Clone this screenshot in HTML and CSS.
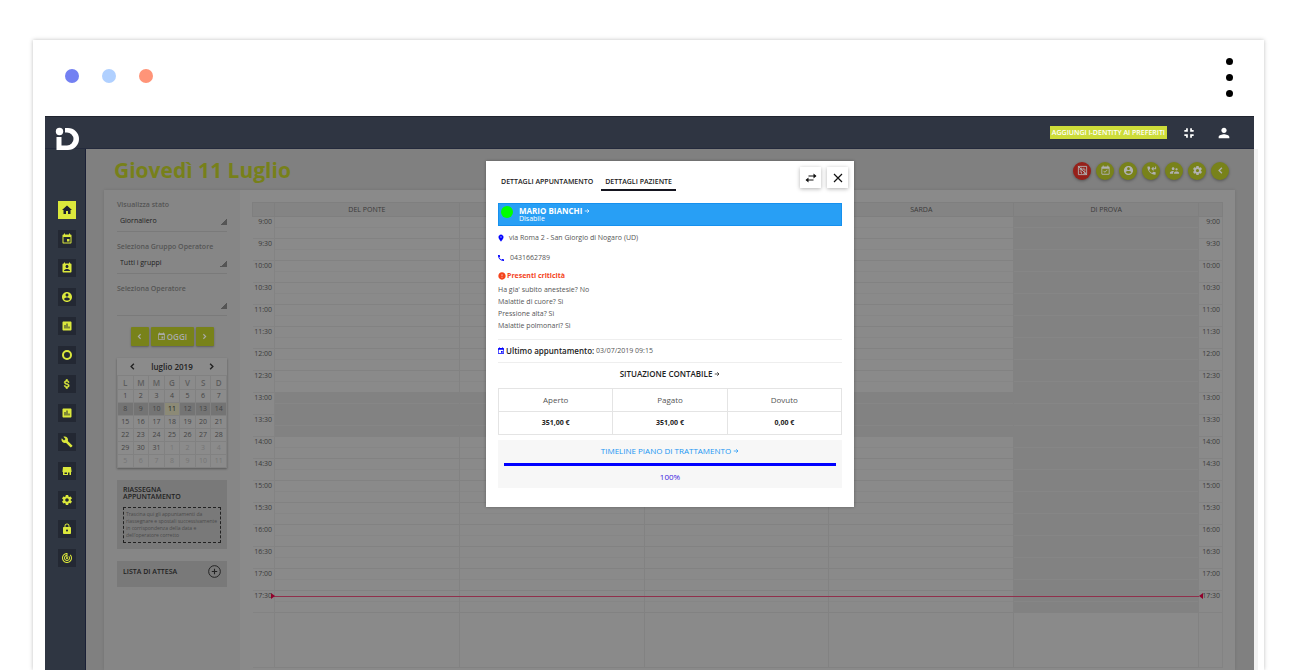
FILE: index.html
```html
<!DOCTYPE html>
<html lang="it">
<head>
<meta charset="utf-8">
<title>Giovedì 11 Luglio</title>
<link rel="stylesheet" href="styles.css">
</head>
<body>
<svg class="sprite" aria-hidden="true">
  <symbol id="home" viewBox="0 0 24 24"><path d="M10 20v-6h4v6h5v-8h3L12 3 2 12h3v8z"/></symbol>
  <symbol id="event" viewBox="0 0 24 24"><path d="M17 12h-5v5h5v-5zM16 1v2H8V1H6v2H5c-1.11 0-1.99.9-1.99 2L3 19c0 1.1.89 2 2 2h14c1.1 0 2-.9 2-2V5c0-1.1-.9-2-2-2h-1V1h-2zm3 18H5V8h14v11z"/></symbol>
  <symbol id="contact" viewBox="0 0 24 24"><path d="M19 3h-1V1h-2v2H8V1H6v2H5c-1.11 0-2 .9-2 2v14c0 1.1.89 2 2 2h14c1.1 0 2-.9 2-2V5c0-1.1-.9-2-2-2zm-7 3c1.66 0 3 1.34 3 3s-1.34 3-3 3-3-1.34-3-3 1.34-3 3-3zm6 12H6v-1c0-2 4-3.1 6-3.1s6 1.1 6 3.1v1z"/></symbol>
  <symbol id="account" viewBox="0 0 24 24"><path d="M12 2C6.48 2 2 6.48 2 12s4.48 10 10 10 10-4.48 10-10S17.52 2 12 2zm0 3c1.66 0 3 1.34 3 3s-1.34 3-3 3-3-1.34-3-3 1.34-3 3-3zm0 14.2c-2.5 0-4.71-1.28-6-3.22.03-1.99 4-3.08 6-3.08 1.99 0 5.97 1.09 6 3.08-1.29 1.94-3.5 3.22-6 3.22z"/></symbol>
  <symbol id="poll" viewBox="0 0 24 24"><path d="M19 3H5c-1.1 0-2 .9-2 2v14c0 1.1.9 2 2 2h14c1.1 0 2-.9 2-2V5c0-1.1-.9-2-2-2zM9 17H7v-7h2v7zm4 0h-2V7h2v10zm4 0h-2v-4h2v4z"/></symbol>
  <symbol id="ring" viewBox="0 0 24 24"><circle cx="12" cy="12" r="8" fill="none" stroke="currentColor" stroke-width="4"/></symbol>
  <symbol id="money" viewBox="0 0 24 24"><path d="M11.8 10.9c-2.27-.59-3-1.2-3-2.15 0-1.09 1.01-1.85 2.7-1.85 1.78 0 2.44.85 2.5 2.1h2.21c-.07-1.72-1.12-3.3-3.21-3.81V3h-3v2.16c-1.94.42-3.5 1.68-3.5 3.61 0 2.31 1.91 3.46 4.7 4.13 2.5.6 3 1.48 3 2.41 0 .69-.49 1.79-2.7 1.79-2.06 0-2.87-.92-2.98-2.1h-2.2c.12 2.19 1.76 3.42 3.68 3.83V21h3v-2.15c1.95-.37 3.5-1.5 3.5-3.55 0-2.84-2.43-3.81-4.7-4.4z" stroke="currentColor"/></symbol>
  <symbol id="build" viewBox="0 0 24 24"><path d="M22.7 19l-9.1-9.1c.9-2.3.4-5-1.5-6.9-2-2-5-2.4-7.4-1.3L9 6 6 9 1.6 4.7C.4 7.1.9 10.1 2.9 12.1c1.9 1.9 4.6 2.4 6.9 1.5l9.1 9.1c.4.4 1 .4 1.4 0l2.3-2.3c.5-.4.5-1.1.1-1.4z"/></symbol>
  <symbol id="store" viewBox="0 0 24 24"><path d="M4 4h16l1 8v2h-1v6h-3v-5h-3v5H4v-6H3v-2zM7 15v3h5v-3z"/></symbol>
  <symbol id="settings" viewBox="0 0 24 24"><path d="M19.43 12.98c.04-.32.07-.64.07-.98s-.03-.66-.07-.98l2.11-1.65c.19-.15.24-.42.12-.64l-2-3.46c-.12-.22-.39-.3-.61-.22l-2.49 1c-.52-.4-1.08-.73-1.69-.98l-.38-2.65C14.46 2.18 14.25 2 14 2h-4c-.25 0-.46.18-.49.42l-.38 2.65c-.61.25-1.17.59-1.69.98l-2.49-1c-.23-.09-.49 0-.61.22l-2 3.46c-.13.22-.07.49.12.64l2.11 1.65c-.04.32-.07.65-.07.98s.03.66.07.98l-2.11 1.65c-.19.15-.24.42-.12.64l2 3.46c.12.22.39.3.61.22l2.49-1c.52.4 1.08.73 1.69.98l.38 2.65c.03.24.24.42.49.42h4c.25 0 .46-.18.49-.42l.38-2.65c.61-.25 1.17-.59 1.69-.98l2.49 1c.23.09.49 0 .61-.22l2-3.46c.12-.22.07-.49-.12-.64l-2.11-1.65zM12 15.5c-1.93 0-3.5-1.57-3.5-3.5s1.57-3.5 3.5-3.5 3.5 1.57 3.5 3.5-1.57 3.5-3.5 3.5z"/></symbol>
  <symbol id="lock" viewBox="0 0 24 24"><path d="M18 8h-1V6c0-2.76-2.24-5-5-5S7 3.24 7 6v2H6c-1.1 0-2 .9-2 2v10c0 1.1.9 2 2 2h12c1.1 0 2-.9 2-2V10c0-1.1-.9-2-2-2zm-6 9c-1.1 0-2-.9-2-2s.9-2 2-2 2 .9 2 2-.9 2-2 2zm3.1-9H8.9V6c0-1.71 1.39-3.1 3.1-3.1 1.71 0 3.1 1.39 3.1 3.1v2z"/></symbol>
  <symbol id="track" viewBox="0 0 24 24"><path d="M19.07 4.93l-1.41 1.41C19.1 7.79 20 9.79 20 12c0 4.42-3.58 8-8 8s-8-3.58-8-8c0-4.08 3.05-7.44 7-7.93v2.02C8.16 6.57 6 9.03 6 12c0 3.31 2.69 6 6 6s6-2.69 6-6c0-1.66-.67-3.16-1.76-4.24l-1.41 1.41C15.55 9.9 16 10.9 16 12c0 2.21-1.79 4-4 4s-4-1.79-4-4c0-1.86 1.28-3.41 3-3.86v2.14c-.6.35-1 .98-1 1.72 0 1.1.9 2 2 2s2-.9 2-2c0-.74-.4-1.38-1-1.72V2h-1C6.48 2 2 6.48 2 12s4.48 10 10 10 10-4.48 10-10c0-2.76-1.12-5.26-2.93-7.07z"/></symbol>
  <symbol id="phone" viewBox="0 0 24 24"><path d="M6.62 10.79c1.44 2.83 3.76 5.14 6.59 6.59l2.2-2.2c.27-.27.67-.36 1.02-.24 1.12.37 2.33.57 3.57.57.55 0 1 .45 1 1V20c0 .55-.45 1-1 1-9.39 0-17-7.61-17-17 0-.55.45-1 1-1h3.5c.55 0 1 .45 1 1 0 1.25.2 2.45.57 3.57.11.35.03.74-.25 1.02l-2.2 2.2z"/></symbol>
  <symbol id="callback" viewBox="0 0 24 24"><use href="#phone"/><path d="M13 8h8V3M16.500 4.500L13 8l3.500 3.500" fill="none" stroke="currentColor" stroke-width="2.200"/></symbol>
  <symbol id="place" viewBox="0 0 24 24"><path d="M12 2C8.130 2 5 5.130 5 9c0 5.250 7 13 7 13s7-7.750 7-13c0-3.870-3.130-7-7-7zm0 9.500c-1.380 0-2.500-1.120-2.500-2.500s1.120-2.500 2.500-2.500 2.500 1.120 2.500 2.500-1.120 2.500-2.500 2.500z" stroke="currentColor"/></symbol>
  <symbol id="person" viewBox="0 0 24 24"><path d="M12 12c2.210 0 4-1.790 4-4s-1.790-4-4-4-4 1.790-4 4 1.790 4 4 4zm0 2c-2.670 0-8 1.340-8 4v2h16v-2c0-2.660-5.330-4-8-4z"/></symbol>
  <symbol id="shrink" viewBox="0 0 24 24"><path d="M4 17h3v3h3v-6H4v3zM7 7H4v3h6V4H7v3zm7 13h3v-3h3v-3h-6v6zm3-13V4h-3v6h6V7h-3z"/></symbol>
  <symbol id="error" viewBox="0 0 24 24"><path d="M12 1C6 1 1 6 1 12s5 11 11 11 11-5 11-11S18 1 12 1zm1 16h-2v-2h2v2zm0-4h-2V7h2v6z"/></symbol>
  <symbol id="available" viewBox="0 0 24 24"><path d="M16.530 11.060L15.470 10l-4.880 4.880-2.120-2.120-1.060 1.060L10.590 17l5.940-5.940zM19 3h-1V1h-2v2H8V1H6v2H5c-1.110 0-1.990.9-1.990 2L3 19c0 1.100.89 2 2 2h14c1.100 0 2-.9 2-2V5c0-1.100-.9-2-2-2zm0 16H5V8h14v11z"/></symbol>
  <symbol id="group" viewBox="0 0 24 24"><path d="M16.500 12c1.380 0 2.490-1.120 2.490-2.500S17.880 7 16.500 7 14 8.120 14 9.500s1.120 2.500 2.500 2.500zM9 11c1.660 0 2.990-1.340 2.990-3S10.660 5 9 5 6 6.340 6 8s1.340 3 3 3zm7.500 3c-1.830 0-5.500.92-5.500 2.750V19h11v-2.250c0-1.830-3.670-2.750-5.500-2.750zM9 13c-2.330 0-7 1.170-7 3.500V19h7v-2.250c0-.85.33-2.340 2.370-3.470C10.500 13.100 9.660 13 9 13z"/></symbol>
  <symbol id="nocode" viewBox="0 0 24 24"><path d="M3 3h18v18H3zM7 7h4v4H7zM15 6v5h4M6 15h4v4M14 14h2v2h3M14 19h5M2 2l20 20" fill="none" stroke="currentColor" stroke-width="2"/></symbol>
  <symbol id="left" viewBox="0 0 24 24"><path d="M15 6l-6 6 6 6" fill="none" stroke="currentColor" stroke-width="3"/></symbol>
  <symbol id="right" viewBox="0 0 24 24"><path d="M9 6l6 6-6 6" fill="none" stroke="currentColor" stroke-width="3"/></symbol>
  <symbol id="arrow" viewBox="0 0 24 24"><path d="M3 12h17M13 5l7 7-7 7" fill="none" stroke="currentColor" stroke-width="3"/></symbol>
  <symbol id="swap" viewBox="0 0 24 24"><path d="M7 8h14M3 16h14" fill="none" stroke="currentColor" stroke-width="2.400"/><path d="M17 3l6 5-6 5zM7 11l-6 5 6 5z"/></symbol>
  <symbol id="close" viewBox="0 0 24 24"><path d="M4 4l16 16M20 4L4 20" fill="none" stroke="currentColor" stroke-width="2.400"/></symbol>
  <symbol id="plus" viewBox="0 0 24 24"><path d="M12 7v10M7 12h10" fill="none" stroke="currentColor" stroke-width="2"/><circle cx="12" cy="12" r="10.800" fill="none" stroke="currentColor" stroke-width="1.800"/></symbol>
</svg>

<div class="frame">
  <header class="chrome">
    <div class="lights"><i class="light violet"></i><i class="light sky"></i><i class="light coral"></i></div>
    <div class="kebab"><i></i><i></i><i></i></div>
  </header>

  <div class="app">
    <div class="topbar">
      <a class="logo" href="#" aria-label="Home">
        <svg viewBox="0 0 24 24"><circle cx="4.500" cy="4.500" r="3.700"/><path d="M1.500 10h5v8.500h5.500a6.300 6.300 0 0 0 0-13H10V1h3a11 11 0 0 1 0 22H1.500z"/></svg>
      </a>
      <button class="favorite">AGGIUNGI I-DENTITY AI PREFERITI</button>
      <button class="bar-icon" aria-label="Riduci"><svg class="ic14"><use href="#shrink"/></svg></button>
      <button class="bar-icon" aria-label="Profilo"><svg class="ic16"><use href="#person"/></svg></button>
    </div>

    <div class="body">
      <nav class="sidebar">
        <a class="active" href="#" aria-label="Home"><svg><use href="#home"/></svg></a>
        <a href="#" aria-label="Agenda"><svg><use href="#event"/></svg></a>
        <a href="#" aria-label="Contatti"><svg><use href="#contact"/></svg></a>
        <a href="#" aria-label="Pazienti"><svg><use href="#account"/></svg></a>
        <a href="#" aria-label="Statistiche"><svg><use href="#poll"/></svg></a>
        <a href="#" aria-label="Utilizzo"><svg><use href="#ring"/></svg></a>
        <a href="#" aria-label="Pagamenti"><svg><use href="#money"/></svg></a>
        <a href="#" aria-label="Report"><svg><use href="#poll"/></svg></a>
        <a href="#" aria-label="Strumenti"><svg><use href="#build"/></svg></a>
        <a href="#" aria-label="Magazzino"><svg><use href="#store"/></svg></a>
        <a href="#" aria-label="Impostazioni"><svg><use href="#settings"/></svg></a>
        <a href="#" aria-label="Sicurezza"><svg><use href="#lock"/></svg></a>
        <a href="#" aria-label="Monitoraggio"><svg><use href="#track"/></svg></a>
      </nav>

      <main class="main">
        <div class="heading">
          <h1>Giovedì 11 Luglio</h1>
          <div class="actions">
            <button class="red" aria-label="Codice"><svg><use href="#nocode"/></svg></button>
            <button aria-label="Disponibilità"><svg><use href="#available"/></svg></button>
            <button aria-label="Paziente"><svg><use href="#account"/></svg></button>
            <button aria-label="Richiami"><svg><use href="#callback"/></svg></button>
            <button aria-label="Gruppo"><svg><use href="#group"/></svg></button>
            <button aria-label="Impostazioni"><svg><use href="#settings"/></svg></button>
            <button aria-label="Chiudi barra"><svg><use href="#left"/></svg></button>
          </div>
        </div>

        <div class="card">
          <aside class="aside">
            <div class="field"><label for="stato">Visualizza stato</label><select id="stato"><option>Giornaliero</option></select></div>
            <div class="field"><label for="gruppo">Seleziona Gruppo Operatore</label><select id="gruppo"><option>Tutti i gruppi</option></select></div>
            <div class="field"><label for="operatore">Seleziona Operatore</label><select id="operatore"><option></option></select></div>
            <div class="pager">
              <button aria-label="Giorno precedente"><svg><use href="#left"/></svg></button>
              <button class="today"><svg><use href="#event"/></svg>OGGI</button>
              <button aria-label="Giorno successivo"><svg><use href="#right"/></svg></button>
            </div>
            <div class="month">
              <div class="month-head">
                <button aria-label="Mese precedente"><svg><use href="#left"/></svg></button>
                <span>luglio 2019</span>
                <button aria-label="Mese successivo"><svg><use href="#right"/></svg></button>
              </div>
              <table>
                <thead><tr><th>L</th><th>M</th><th>M</th><th>G</th><th>V</th><th>S</th><th>D</th></tr></thead>
                <tbody>
                  <tr><td>1</td><td>2</td><td>3</td><td>4</td><td>5</td><td>6</td><td>7</td></tr>
                  <tr class="week"><td>8</td><td>9</td><td>10</td><td class="now">11</td><td>12</td><td>13</td><td>14</td></tr>
                  <tr><td>15</td><td>16</td><td>17</td><td>18</td><td>19</td><td>20</td><td>21</td></tr>
                  <tr><td>22</td><td>23</td><td>24</td><td>25</td><td>26</td><td>27</td><td>28</td></tr>
                  <tr><td>29</td><td>30</td><td>31</td><td class="out">1</td><td class="out">2</td><td class="out">3</td><td class="out">4</td></tr>
                  <tr><td class="out">5</td><td class="out">6</td><td class="out">7</td><td class="out">8</td><td class="out">9</td><td class="out">10</td><td class="out">11</td></tr>
                </tbody>
              </table>
            </div>
            <section class="box">
              <h2>RIASSEGNA<br>APPUNTAMENTO</h2>
              <p class="drop">Trascina qui gli appuntamenti da<br>riassegnare e spostali successivamente<br>in corrispondenza della data e<br>dell'operatore corretto</p>
            </section>
            <section class="box waiting">
              <h2>LISTA DI ATTESA</h2>
              <button aria-label="Aggiungi"><svg><use href="#plus"/></svg></button>
            </section>
          </aside>

          <div class="schedule">
            <table class="agenda">
              <colgroup><col class="axis-left"><col><col><col><col><col><col class="axis-right"></colgroup>
              <thead><tr><th></th><th>DEL PONTE</th><th></th><th></th><th>SARDA</th><th>DI PROVA</th><th></th></tr></thead>
              <tbody>
                <tr><th>9:00</th><td></td><td></td><td></td><td></td><td></td><th>9:00</th></tr>
                <tr><th>9:30</th><td></td><td></td><td></td><td></td><td></td><th>9:30</th></tr>
                <tr><th>10:00</th><td></td><td></td><td></td><td></td><td></td><th>10:00</th></tr>
                <tr><th>10:30</th><td></td><td></td><td></td><td></td><td></td><th>10:30</th></tr>
                <tr><th>11:00</th><td></td><td></td><td></td><td></td><td></td><th>11:00</th></tr>
                <tr><th>11:30</th><td></td><td></td><td></td><td></td><td></td><th>11:30</th></tr>
                <tr><th>12:00</th><td></td><td></td><td></td><td></td><td></td><th>12:00</th></tr>
                <tr><th>12:30</th><td></td><td></td><td></td><td></td><td></td><th>12:30</th></tr>
                <tr class="pause"><th>13:00</th><td></td><td></td><td></td><td></td><td></td><th>13:00</th></tr>
                <tr class="pause"><th>13:30</th><td></td><td></td><td></td><td></td><td></td><th>13:30</th></tr>
                <tr><th>14:00</th><td></td><td></td><td></td><td></td><td></td><th>14:00</th></tr>
                <tr><th>14:30</th><td></td><td></td><td></td><td></td><td></td><th>14:30</th></tr>
                <tr><th>15:00</th><td></td><td></td><td></td><td></td><td></td><th>15:00</th></tr>
                <tr><th>15:30</th><td></td><td></td><td></td><td></td><td></td><th>15:30</th></tr>
                <tr><th>16:00</th><td></td><td></td><td></td><td></td><td></td><th>16:00</th></tr>
                <tr><th>16:30</th><td></td><td></td><td></td><td></td><td></td><th>16:30</th></tr>
                <tr><th>17:00</th><td></td><td></td><td></td><td></td><td></td><th>17:00</th></tr>
                <tr><th>17:30</th><td></td><td></td><td></td><td></td><td></td><th>17:30</th></tr>
                <tr class="rest"><th></th><td></td><td></td><td></td><td></td><td></td><th></th></tr>
              </tbody>
            </table>
            <div class="time-now"></div>
          </div>
        </div>

        <div class="overlay">
          <div class="modal" role="dialog" aria-label="Dettagli paziente">
            <div class="modal-head">
              <div class="tabs">
                <button>DETTAGLI APPUNTAMENTO</button>
                <button class="current">DETTAGLI PAZIENTE</button>
              </div>
              <div class="tools">
                <button aria-label="Sposta"><svg><use href="#swap"/></svg></button>
                <button aria-label="Chiudi"><svg><use href="#close"/></svg></button>
              </div>
            </div>
            <div class="patient">
              <i class="status"></i>
              <div>
                <a href="#">MARIO BIANCHI <svg><use href="#arrow"/></svg></a>
                <small>Disabile</small>
              </div>
            </div>
            <p class="info address"><svg><use href="#place"/></svg>via Roma 2 - San Giorgio di Nogaro (UD)</p>
            <p class="info tel"><svg><use href="#phone"/></svg>0431662789</p>
            <div class="critical">
              <h3><svg><use href="#error"/></svg>Presenti criticità</h3>
              <p>Ha gia' subito anestesie? No</p>
              <p>Malattie di cuore? Sì</p>
              <p>Pressione alta? Sì</p>
              <p>Malattie polmonari? Sì</p>
            </div>
            <p class="last"><svg><use href="#event"/></svg><b>Ultimo appuntamento:</b>&nbsp;03/07/2019 09:15</p>
            <a class="account-link" href="#">SITUAZIONE CONTABILE <svg><use href="#arrow"/></svg></a>
            <table class="totals">
              <thead><tr><th>Aperto</th><th>Pagato</th><th>Dovuto</th></tr></thead>
              <tbody><tr><td>351,00 €</td><td>351,00 €</td><td>0,00 €</td></tr></tbody>
            </table>
            <div class="timeline">
              <a href="#">TIMELINE PIANO DI TRATTAMENTO <svg><use href="#arrow"/></svg></a>
              <div class="track"><div class="fill" style="width:100%"></div></div>
              <span>100%</span>
            </div>
          </div>
        </div>
      </main>
    </div>
  </div>
</div>
</body>
</html>
```

FILE: styles.css
```css
* { box-sizing: border-box; }

body {
  margin: 0;
  min-height: 100vh;
  display: flex;
  flex-direction: column;
  padding: 40px 36px 0 33px;
  background: #fff;
  color: #333;
  font: 8px/12px "Open Sans", "Noto Sans", sans-serif;
}

h1, h2, h3, p { margin: 0; font-size: inherit; }
a { color: inherit; text-decoration: none; }
button {
  display: flex;
  align-items: center;
  justify-content: center;
  margin: 0;
  padding: 0;
  border: 0;
  background: none;
  color: inherit;
  font: inherit;
  cursor: pointer;
}
table { border-collapse: collapse; table-layout: fixed; width: 100%; }
th, td { padding: 0; font-weight: inherit; }
svg { display: block; fill: currentColor; flex: none; }
.sprite { position: absolute; width: 0; height: 0; }

/* Window frame */
.frame {
  flex: 1;
  display: flex;
  flex-direction: column;
  padding: 0 10px 0 12px;
  background: #fff;
  box-shadow: 0 0 4px rgba(0, 0, 0, .25);
}
.chrome {
  display: flex;
  justify-content: space-between;
  align-items: flex-start;
  height: 76px;
  padding: 18px 21px 0 20px;
}
.lights { display: flex; gap: 23px; padding-top: 11px; }
.light { width: 14px; height: 14px; border-radius: 50%; }
.violet { background: #7380f2; }
.sky { background: #b0d0ff; }
.coral { background: #ff9478; }
.kebab { display: flex; flex-direction: column; gap: 9px; }
.kebab i { width: 7px; height: 7px; border-radius: 50%; background: #000; }

/* App shell */
.app { flex: 1; display: flex; flex-direction: column; background: #2f3642; }
.topbar {
  display: flex;
  align-items: center;
  height: 33px;
  padding: 0 22px 0 10px;
  border-top: 1px solid #20242f;
  border-bottom: 1px solid #242a3c;
  background: #2f3542;
  color: #fff;
}
.logo { align-self: flex-start; margin-right: auto; padding-top: 10px; z-index: 1; }
.logo svg { width: 24px; height: 24px; }
.favorite {
  height: 13px;
  margin-right: 15px;
  padding: 0 2px;
  background: #cddc39;
  font-size: 7px;
  font-weight: 600;
}
.bar-icon + .bar-icon { margin-left: 20px; }
.ic14 { width: 14px; height: 14px; }
.ic16 { width: 16px; height: 16px; }
.body { flex: 1; display: flex; }
.sidebar {
  display: flex;
  flex-direction: column;
  gap: 11px;
  align-items: center;
  width: 41px;
  padding-top: 52px;
  padding-left: 3px;
  border-right: 1px solid #1a2036;
}
.sidebar a {
  display: flex;
  align-items: center;
  justify-content: center;
  width: 18px;
  height: 18px;
  background: #232833;
  color: #dbe83c;
}
.sidebar a.active { background: #dbe83c; color: #1b2030; }
.sidebar svg { width: 12px; height: 12px; }

.main {
  flex: 1;
  position: relative;
  display: flex;
  flex-direction: column;
  padding: 0 19px 0 18px;
  background: #808080;
  box-shadow: 4px 0 0 #f2f2f2;
}
.heading {
  display: flex;
  align-items: center;
  justify-content: space-between;
  height: 41px;
  padding: 0 6px 0 10px;
}
h1 { color: #77801a; font-size: 21px; line-height: 30px; font-weight: 700; }
.actions { display: flex; gap: 5px; padding-top: 2px; }
.actions button {
  width: 18px;
  height: 18px;
  border-radius: 50%;
  background: #78821a;
  color: #b0b0b0;
  box-shadow: 0 1px 3px rgba(0, 0, 0, .35);
}
.actions .red { background: #96201a; }
.actions svg { width: 11px; height: 11px; }

.card { flex: 1; display: flex; background: #8a8a8a; box-shadow: 0 0 3px rgba(0, 0, 0, .12); }
.aside { width: 136px; padding: 9px 13px 0; background: #868686; }

.field { height: 33px; margin-bottom: 9px; border-bottom: 1px solid #7a7a7a; }
.field label { display: block; color: #555; font-size: 7px; font-weight: 600; }
.field select {
  display: block;
  width: 100%;
  height: 20px;
  padding: 0 3px;
  border: 0;
  appearance: none;
  background: linear-gradient(135deg, transparent 50%, #555 50%) right 7px / 7px 7px no-repeat;
  color: #222;
  font: inherit;
  font-size: 7px;
}
.pager { display: flex; justify-content: center; gap: 2px; padding-top: 2px; }
.pager button {
  width: 18px;
  height: 19px;
  border-radius: 1px;
  background: #78821a;
  color: #aaa;
  box-shadow: 0 1px 2px rgba(0, 0, 0, .3);
}
.pager .today { width: 43px; gap: 1px; font-weight: 600; }
.pager svg { width: 9px; height: 9px; }

.month { margin-top: 12px; background: #8b8b8b; box-shadow: 0 1px 2px rgba(0, 0, 0, .35); }
.month-head {
  display: flex;
  align-items: center;
  justify-content: space-between;
  height: 17px;
  padding: 0 10px;
  color: #222;
  font-weight: 600;
}
.month-head svg { width: 11px; height: 11px; }
.month table { text-align: center; font-size: 7px; line-height: 12px; color: #444; }
.month th { height: 14px; border: 1px solid #818181; color: #5d5d5d; font-size: 8px; font-weight: 600; }
.month td { height: 13px; border: 1px solid #818181; }
.month .week td { background: #747474; }
.month .week .now { background: #8c8a76; color: #222; }
.month .out { color: #757575; }

.box { margin-top: 12px; padding: 6px; background: #797979; }
.box h2 { color: #222; font-size: 7px; line-height: 7px; font-weight: 600; }
.drop {
  margin-top: 7px;
  padding: 3px 2px;
  border: 1px dashed #222;
  color: #4a4a4a;
  font-size: 5px;
  line-height: 7px;
  white-space: nowrap;
}
.waiting { display: flex; justify-content: space-between; align-items: flex-start; height: 26px; padding-top: 4px; }
.waiting h2 { line-height: 13px; }
.waiting svg { width: 13px; height: 13px; color: #222; }

/* Day schedule */
.schedule { flex: 1; position: relative; padding: 12px 12px 0; }
.agenda { font-size: 7px; line-height: 10px; color: #3a3a3a; }
.axis-left { width: 22px; }
.axis-right { width: 24px; }
.agenda thead th {
  height: 14px;
  border: 1px solid #7f7f7f;
  background: #848484;
  line-height: 12px;
}
.agenda tbody th {
  height: 22px;
  border: 1px solid #838383;
  border-left: 0;
  padding-right: 2px;
  text-align: right;
  vertical-align: top;
  white-space: nowrap;
}
.agenda td {
  border: 1px solid #828282;
  background: linear-gradient(#868686, #868686) 0 10px / 100% 1px no-repeat;
}
.agenda tr:not(.rest) td:nth-child(6), .pause td { background-color: #828282; }
.agenda .rest th { height: 55px; }
.agenda .rest td { background: none; }
.time-now {
  position: absolute;
  top: 406px;
  left: 34px;
  right: 36px;
  height: 1px;
  background: #90304c;
}
.time-now::before, .time-now::after {
  content: "";
  position: absolute;
  top: -3px;
  border: 3px solid transparent;
}
.time-now::before { left: -3px; border-left: 4px solid #90002c; border-right: 0; }
.time-now::after { right: -4px; border-right: 4px solid #90002c; border-left: 0; }

/* Patient dialog */
.overlay { position: absolute; inset: 12px 0 auto; display: flex; justify-content: center; }
.modal {
  width: 368px;
  padding: 6px 12px 19px;
  background: #fff;
  color: #555;
  box-shadow: 0 0 3px rgba(0, 0, 0, .3);
}
.modal-head { display: flex; justify-content: space-between; margin-right: -6px; }
.tabs { display: flex; gap: 4px; margin-left: -1px; padding-top: 6px; color: #222; font-size: 7px; font-weight: 600; }
.tabs button { height: 18px; padding: 1px 4px 0; border-bottom: 2px solid transparent; }
.tabs .current { border-color: #15151f; }
.tools { display: flex; gap: 6px; color: #111; }
.tools button { width: 21px; height: 21px; background: #fff; box-shadow: 0 1px 4px rgba(0, 0, 0, .3); }
.tools svg { width: 12px; height: 12px; }
.patient {
  display: flex;
  gap: 6px;
  height: 23px;
  margin-top: 12px;
  padding: 2px;
  border: 1px solid #1590ee;
  background: #289ff5;
  color: #fff;
  line-height: 9px;
}
.status { width: 12px; height: 12px; border-radius: 50%; background: #0f0; }
.patient a, .account-link, .timeline a { display: flex; align-items: center; gap: 2px; }
.patient a { font-weight: 700; }
.patient small { display: block; font-size: 7px; line-height: 8px; }
.patient svg, .account-link svg, .timeline svg { width: 6px; height: 6px; }
.info { display: flex; align-items: center; height: 20px; font-size: 7px; }
.info svg { color: #00f; margin-left: -1px; }
.address { margin-top: 2px; gap: 4px; }
.address svg, .tel svg { width: 8px; height: 8px; }
.tel { gap: 5px; }
.critical { padding-bottom: 7px; border-bottom: 1px solid #eee; font-size: 7px; }
.critical h3 { display: flex; align-items: center; gap: 1px; height: 16px; color: #f4431c; font-weight: 700; }
.critical svg { width: 8px; height: 8px; }
.last { display: flex; align-items: center; height: 23px; border-bottom: 1px solid #eee; font-size: 7px; }
.last b { color: #222; font-size: 8px; font-weight: 600; }
.last svg { width: 8px; height: 8px; margin-left: -1px; margin-right: 1px; color: #00f; }
.account-link { justify-content: center; height: 25px; padding-bottom: 3px; color: #222; font-weight: 600; }
.totals { text-align: center; }
.totals th, .totals td { height: 23px; border: 1px solid #e4e4e4; }
.totals td { color: #222; font-size: 7px; font-weight: 700; }
.timeline { margin-top: 5px; padding: 5px 6px; background: #f7f7f7; text-align: center; }
.timeline a { justify-content: center; color: #2196f3; }
.track { margin: 6px 0 5px; background: #ddd; }
.fill { height: 3px; background: #00f; }
.timeline span { display: block; color: #3c22e0; }
```
